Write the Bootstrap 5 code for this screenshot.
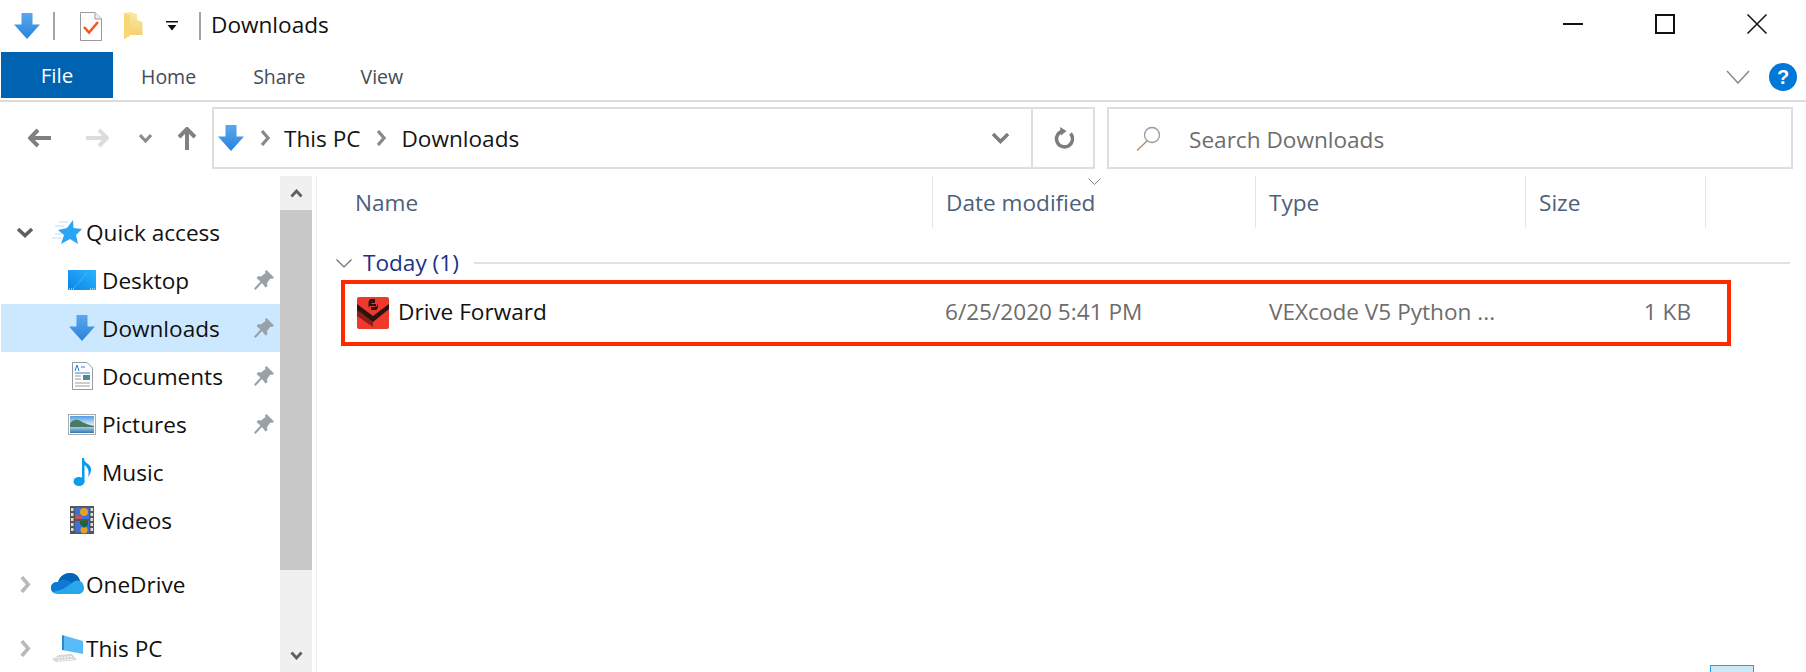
<!DOCTYPE html>
<html lang="en">
<head>
<meta charset="utf-8">
<title>Downloads</title>
<link href="https://cdn.jsdelivr.net/npm/bootstrap@5.3.0/dist/css/bootstrap.min.css" rel="stylesheet">
<style>
html,body{height:672px;overflow:hidden;background:#fff}
body{font-family:"Open Sans","Noto Sans",sans-serif;font-size:22.6px;line-height:1.2;color:#111;position:relative}
svg{display:block;flex:none}
.tbar{height:52px}
.tttl{margin-left:10px;margin-top:-3px}
.tsep{width:2px;height:28px;background:#a5a5a5}
.wbtn{width:92px}
.rib{height:50px;border-bottom:2px solid #dcdcdc}
.ftab{width:112px;height:46px;margin-left:1px;background:#0063b1;color:#fff;font-size:20.6px;padding-top:1px}
.rtab{color:#444b56;font-size:19.5px;padding-top:4px}
.rib-tabs{height:46px}
.hometab{margin-left:28px}.sharetab{margin-left:57px}.viewtab{margin-left:55px}
.addr{height:74px;padding-top:5px;padding-bottom:7px}
.navbtns{width:212px}
.abox{height:62px;border:2px solid #dedede}
.apath{width:883px;margin-right:12px}
.sbox{width:686px}
.adiv{width:2px;height:100%;background:#dedede}
.crumb{color:#151515;padding-top:2px}
.srch{margin-left:28px;padding-top:3px}
.main{height:496px}
.nv{width:280px;padding-left:1px;padding-top:32px}
.nrow{height:48px;color:#111}
.nrow>span{padding-top:2px}
.nrow.sel{background:#cce8ff}
.twist{width:47px}
.slot1{width:38px}
.lead2{width:61px}
.slot2{width:40px}
.pin{margin-right:6px}
.gapr{margin-top:16px}
.vscr{width:32px;background:#f0f0f0}
.vcap{height:34px}
.vthumb{height:360px;background:#c8c8c8}
.pane{margin-left:4px;border-left:1px solid #f0f0f0}
.hdr{height:52px;color:#4c607a}
.hc{height:52px;border-right:1px solid #e5e5e5;position:relative;padding-top:2px}
.hc1{width:616px;padding-left:38px}
.hc2{width:323px;padding-left:13px}
.hc3{width:270px;padding-left:13px}
.hc4{width:180px;padding-left:13px}
.caret{position:absolute;left:155px;top:2px}
.grp{height:52px;color:#1e3287;padding-left:19px;padding-top:18px}
.grp-t{margin-left:11px;margin-right:15px}
.grp-l{height:2px;flex:0 0 auto;width:1316px;background:#e2e2e2}
.frow{width:1390px;height:66px;margin-left:24px;border:4px solid #ff2a00;padding-left:12px}
.fname{width:547px;margin-left:9px;margin-top:-2px}
.fgr{color:#6d6d6d}
.frow .fgr{margin-top:-2px}
.fdate{width:324px}
.ftype{width:270px}
.fsize{width:152px;text-align:right}
.seltick{position:absolute;left:1710px;top:665px;width:44px;height:7px;background:#cce8f7;border:1.5px solid #26a0da;border-bottom:0}
</style>
</head>
<body>
<svg width="0" height="0" class="position-absolute">
<defs>
<linearGradient id="gdl" x1="0" y1="0" x2="0" y2="1"><stop offset="0" stop-color="#5aa8ee"/><stop offset="1" stop-color="#2a82dc"/></linearGradient>
<linearGradient id="gdk" x1="0" y1="1" x2="1" y2="0"><stop offset="0" stop-color="#0a84e6"/><stop offset="1" stop-color="#2db4ff"/></linearGradient>
<linearGradient id="gfo" x1="0" y1="0" x2="0" y2="1"><stop offset="0" stop-color="#fbe9a6"/><stop offset="1" stop-color="#f2cd6c"/></linearGradient>
<linearGradient id="gsk" x1="0" y1="0" x2="0" y2="1"><stop offset="0" stop-color="#4f9fe6"/><stop offset=".5" stop-color="#d4e8f2"/></linearGradient>
<linearGradient id="gwa" x1="0" y1="0" x2="0" y2="1"><stop offset="0" stop-color="#a8cfe0"/><stop offset="1" stop-color="#2f7ab8"/></linearGradient>
<symbol id="dl" viewBox="0 0 26 26"><path d="M7.500 0H18.500V11.500H26L13 26 0 11.500H7.500Z" fill="url(#gdl)"/></symbol>
<symbol id="pin" viewBox="0 0 20 20"><path d="M12.500 0 20 7.500 18 9 16.500 8.500 13 13 13.500 16 11.500 17.500 8 13 1.500 20 0 18.500 6.500 11.500 2.500 8 4.500 6 7 6.500 11.500 3 11 1.500Z" fill="#98a1a8"/></symbol>
<symbol id="cr" viewBox="0 0 10 16"><path d="M2 1 8 8 2 15" fill="none" stroke="#8a8a8a" stroke-width="3.200"/></symbol>
<symbol id="crl" viewBox="0 0 10 16"><path d="M2 1 8 8 2 15" fill="none" stroke="#b9b9b9" stroke-width="3.400"/></symbol>
</defs>
</svg>

<header class="tbar d-flex align-items-center">
  <svg width="26" height="26" style="margin-left:14px"><use href="#dl"/></svg>
  <span class="tsep" style="margin-left:13px"></span>
  <svg width="22" height="29" viewBox="0 0 22 29" style="margin-left:25px"><path d="M.5.500H15L21.500 7V28.500H.5Z" fill="#fff" stroke="#9a9a9a"/><path d="M15 .5V7H21.500" fill="#eee" stroke="#9a9a9a"/><path d="M4 15 9 20.500 18 10" fill="none" stroke="#f0591e" stroke-width="2.500"/></svg>
  <svg width="19" height="28" viewBox="0 0 19 28" style="margin-left:22px"><path d="M0 1 6 0 13 2V8L18.500 10V23H6L0 27Z" fill="url(#gfo)"/><path d="M0 1 6 3V24L0 27Z" fill="#f7d873"/></svg>
  <svg width="12" height="11" viewBox="0 0 12 11" style="margin-left:23px"><path d="M0 0H12V1.500H0ZM1.500 4H10.500L6 9.500Z" fill="#111"/></svg>
  <span class="tsep" style="margin-left:21px"></span>
  <span class="tttl">Downloads</span>
  <div class="ms-auto d-flex align-items-center" style="margin-right:3px;margin-top:-4px">
    <div class="wbtn d-flex justify-content-center"><svg width="20" height="2"><rect width="20" height="2" fill="#111"/></svg></div>
    <div class="wbtn d-flex justify-content-center"><svg width="20" height="20"><rect x="1" y="1" width="18" height="18" fill="none" stroke="#111" stroke-width="2"/></svg></div>
    <div class="wbtn d-flex justify-content-center"><svg width="20" height="20"><path d="M.5.500 19.500 19.500M19.500.500.5 19.500" stroke="#111" stroke-width="1.500"/></svg></div>
  </div>
</header>

<nav class="rib d-flex align-items-start">
  <div class="rib-tabs d-flex align-items-center w-100">
    <div class="ftab d-flex align-items-center justify-content-center">File</div>
    <span class="rtab hometab">Home</span>
    <span class="rtab sharetab">Share</span>
    <span class="rtab viewtab">View</span>
    <div class="ms-auto d-flex align-items-center" style="margin-right:9px;margin-top:4px">
      <svg width="24" height="14" viewBox="0 0 24 14"><path d="M1 1 12 13 23 1" fill="none" stroke="#8a8a8a" stroke-width="1.500"/></svg>
      <svg width="28" height="28" viewBox="0 0 28 28" style="margin-left:19px"><circle cx="14" cy="14" r="14" fill="#0078d7"/><text x="14" y="21" text-anchor="middle" fill="#fff" font-family="Liberation Sans,sans-serif" font-weight="700" font-size="20">?</text></svg>
    </div>
  </div>
</nav>

<section class="addr d-flex align-items-center">
  <div class="navbtns d-flex align-items-center">
    <svg width="23" height="20" viewBox="0 0 23 20" style="margin-left:28px"><path d="M10 2 2 10 10 18M2 10H23" fill="none" stroke="#808080" stroke-width="4"/></svg>
    <svg width="23" height="20" viewBox="0 0 23 20" style="margin-left:35px"><path d="M13 2 21 10 13 18M21 10H0" fill="none" stroke="#dcdcdc" stroke-width="4"/></svg>
    <svg width="13" height="9" viewBox="0 0 13 9" style="margin-left:30px"><path d="M1 1 6.500 7 12 1" fill="none" stroke="#8a8a8a" stroke-width="3"/></svg>
    <svg width="18" height="23" viewBox="0 0 18 23" style="margin-left:26px"><path d="M1 10 9 2 17 10M9 2V23" fill="none" stroke="#808080" stroke-width="4"/></svg>
  </div>
  <div class="abox apath d-flex align-items-center">
    <svg width="26" height="26" style="margin-left:4px"><use href="#dl"/></svg>
    <svg width="10" height="16" style="margin-left:16px"><use href="#cr"/></svg>
    <span class="crumb" style="margin-left:14px">This PC</span>
    <svg width="10" height="16" style="margin-left:16px"><use href="#cr"/></svg>
    <span class="crumb" style="margin-left:15px">Downloads</span>
    <svg class="ms-auto" width="19" height="12" viewBox="0 0 19 12" style="margin-right:21px"><path d="M2 2 9.500 9.500 17 2" fill="none" stroke="#7c7c7c" stroke-width="3.500"/></svg>
    <span class="adiv"></span>
    <svg width="22" height="23" viewBox="0 0 22 23" style="margin-left:19px;margin-right:19px"><path d="M18.500 6.500A8 8 0 1 1 11 4" fill="none" stroke="#7c7c7c" stroke-width="3.500"/><path d="M8 0 14.500 4 9 8.500Z" fill="#7c7c7c"/></svg>
  </div>
  <div class="abox sbox d-flex align-items-center">
    <svg width="25" height="25" viewBox="0 0 25 25" style="margin-left:27px"><circle cx="16" cy="9" r="7.500" fill="none" stroke="#9b9b9b" stroke-width="1.300"/><path d="M11 15 1 24.500" stroke="#b9946a" stroke-width="1.500"/></svg>
    <span class="fgr srch">Search Downloads</span>
  </div>
</section>

<main class="main d-flex">
  <aside class="nv">
    <div class="nrow d-flex align-items-center">
      <div class="twist d-flex justify-content-center"><svg width="18" height="11" viewBox="0 0 18 11"><path d="M2 2 9 8.500 16 2" fill="none" stroke="#5f5f5f" stroke-width="3.500"/></svg></div>
      <div class="slot1 d-flex justify-content-center"><svg width="30" height="24" viewBox="0 0 30 24"><path d="M21 0 21.500 8 30 9 24 15 26 24 18 19 9 24 12 15 6 10 15 8Z" fill="#29a5f5"/><path d="M7 2H16M3 6H12M3 14H10M0 18H10" stroke="#b7def8" stroke-width="1.200"/></svg></div>
      <span>Quick access</span>
    </div>
    <div class="nrow d-flex align-items-center">
      <div class="lead2"></div><div class="slot2 d-flex justify-content-center"><svg width="28" height="20" viewBox="0 0 28 20"><rect width="28" height="20" fill="url(#gdk)"/><path d="M6 18 19 3" stroke="#5fc6ff" opacity=".6"/><path d="M1 19H7M22 19H27" stroke="#fff" stroke-dasharray="1 1"/></svg></div>
      <span>Desktop</span>
      <svg class="pin ms-auto" width="20" height="20"><use href="#pin"/></svg>
    </div>
    <div class="nrow sel d-flex align-items-center">
      <div class="lead2"></div><div class="slot2 d-flex justify-content-center"><svg width="26" height="26"><use href="#dl"/></svg></div>
      <span>Downloads</span>
      <svg class="pin ms-auto" width="20" height="20"><use href="#pin"/></svg>
    </div>
    <div class="nrow d-flex align-items-center">
      <div class="lead2"></div><div class="slot2 d-flex justify-content-center"><svg width="21" height="28" viewBox="0 0 21 28"><path d="M.5.500H15L20.500 6V27.500H.5Z" fill="#fff" stroke="#999"/><path d="M9 5H13M3 11H18" stroke="#2d7fd6" fill="none"/><path d="M3 9 5 3 7 9" stroke="#2d7fd6" fill="none"/><rect x="11" y="13" width="7" height="5" fill="#4a8a9a"/><path d="M3 14H9M3 17H9M3 21H18M3 24H18" stroke="#9a9a9a"/></svg></div>
      <span>Documents</span>
      <svg class="pin ms-auto" width="20" height="20"><use href="#pin"/></svg>
    </div>
    <div class="nrow d-flex align-items-center">
      <div class="lead2"></div><div class="slot2 d-flex justify-content-center"><svg width="28" height="21" viewBox="0 0 28 21"><rect x=".5" y=".5" width="27" height="20" fill="#fff" stroke="#aaa"/><rect x="2" y="2" width="24" height="17" fill="url(#gsk)"/><path d="M2 9C6 5 10 5 14 8 18 10 22 11 26 12V13H2Z" fill="#4a7a62"/><rect x="2" y="13" width="24" height="6" fill="url(#gwa)"/></svg></div>
      <span>Pictures</span>
      <svg class="pin ms-auto" width="20" height="20"><use href="#pin"/></svg>
    </div>
    <div class="nrow d-flex align-items-center">
      <div class="lead2"></div><div class="slot2 d-flex justify-content-center"><svg width="19" height="28" viewBox="0 0 19 28"><ellipse cx="6" cy="23.500" rx="5.500" ry="4.500" fill="#0a9bee"/><path d="M9 2V24H11.500V7C14 9 17 12 15 19 18.500 15 19.500 9 15 6 12.500 4.500 11 3 11 0H9Z" fill="#0a9bee"/></svg></div>
      <span>Music</span>
    </div>
    <div class="nrow d-flex align-items-center">
      <div class="lead2"></div><div class="slot2 d-flex justify-content-center"><svg width="24" height="28" viewBox="0 0 24 28"><rect width="24" height="28" fill="#555"/><path d="M1 2H3.500V5H1ZM1 7H3.500V10H1ZM1 12H3.500V15H1ZM1 17H3.500V20H1ZM1 22H3.500V25H1ZM20.500 2H23V5H20.500ZM20.500 7H23V10H20.500ZM20.500 12H23V15H20.500ZM20.500 17H23V20H20.500ZM20.500 22H23V25H20.500Z" fill="#ddd"/><rect x="5" y="1.500" width="14" height="11.500" fill="#3a70e0"/><rect x="5" y="15" width="14" height="11.500" fill="#3a70e0"/><circle cx="14" cy="6" r="4" fill="#e8a020"/><circle cx="14" cy="24" r="3.500" fill="#e8a020"/><path d="M6 13H12V10L6 9Z" fill="#d05050"/><path d="M10 15H18V19L14 22 10 18Z" fill="#1a6a30"/></svg></div>
      <span>Videos</span>
    </div>
    <div class="nrow gapr d-flex align-items-center">
      <div class="twist d-flex justify-content-center"><svg width="12" height="17"><use href="#crl"/></svg></div>
      <div class="slot1 d-flex justify-content-center"><svg width="33" height="22" viewBox="0 0 33 22"><path d="M7 21C2 21 0 18 0 15 0 11 3 8.500 7 9 9 3 14 0 19 0 24 0 28 3 29 8 31.500 9 33 12 33 15 33 19 30 21 27 21Z" fill="#28a8ea"/><path d="M7 9C9 3 14 0 19 0 24 0 28 3 29 8 25 7 23 8 21 10L14 7C11 7 9 8 7 9Z" fill="#0364b8"/><path d="M0 15C0 11 3 8.500 7 9 9 8 11 7 14 7L21 10 12 16 2 19C1 18 0 17 0 15Z" fill="#0f78d4"/></svg></div>
      <span>OneDrive</span>
    </div>
    <div class="nrow gapr d-flex align-items-center">
      <div class="twist d-flex justify-content-center"><svg width="12" height="17"><use href="#crl"/></svg></div>
      <div class="slot1 d-flex justify-content-center"><svg width="31" height="27" viewBox="0 0 31 27"><path d="M10 0 31 6V19L10 15Z" fill="#58bdf7"/><path d="M10 0 12 1V15L10 15Z" fill="#2a88c8"/><path d="M7 20 20 19 25 25 4 27 0 24Z" fill="#d4d8da"/><path d="M3 23 21 21.500M6 25.500 22 24" stroke="#fff" stroke-dasharray="2 1"/></svg></div>
      <span>This PC</span>
    </div>
  </aside>

  <div class="vscr d-flex flex-column">
    <div class="vcap d-flex align-items-center justify-content-center"><svg width="13" height="9" viewBox="0 0 13 9"><path d="M1.500 7.500 6.500 2 11.500 7.500" fill="none" stroke="#5f5f5f" stroke-width="2.800"/></svg></div>
    <div class="vthumb"></div>
    <div class="mt-auto d-flex align-items-center justify-content-center vcap"><svg width="13" height="9" viewBox="0 0 13 9"><path d="M1.500 1.500 6.500 7 11.500 1.500" fill="none" stroke="#5f5f5f" stroke-width="2.800"/></svg></div>
  </div>

  <section class="pane flex-grow-1">
    <div class="hdr d-flex">
      <div class="hc hc1 d-flex align-items-center">Name</div>
      <div class="hc hc2 d-flex align-items-center">Date modified
        <svg class="caret" width="13" height="7" viewBox="0 0 13 7"><path d="M.5.500 6.500 6.500 12.500.5" fill="none" stroke="#808080"/></svg></div>
      <div class="hc hc3 d-flex align-items-center">Type</div>
      <div class="hc hc4 d-flex align-items-center">Size</div>
    </div>
    <div class="grp d-flex align-items-center">
      <svg width="16" height="9" viewBox="0 0 16 9"><path d="M.5.500 8 8 15.500.5" fill="none" stroke="#6b6b6b" stroke-width="1.200"/></svg>
      <span class="grp-t">Today (1)</span>
      <span class="grp-l"></span>
    </div>
    <div class="frow d-flex align-items-center">
      <svg width="32" height="32" viewBox="0 0 32 32"><rect width="32" height="32" rx="2" fill="#ee3a2c"/><path d="M0 13 16 25 16 30 0 19Z" fill="#8f1d17"/><path d="M0 7 16 19 32 7V12L16 25 0 13Z" fill="#2c1210"/><path d="M13 2H18V6H14.500V7H19V9H13L11.500 10.500V5ZM21 6V10L19.500 13H14V10H17.500V9.500H20Z" fill="#2c1210"/></svg>
      <span class="fname">Drive Forward</span>
      <span class="fgr fdate">6/25/2020 5:41 PM</span>
      <span class="fgr ftype">VEXcode V5 Python ...</span>
      <span class="fgr fsize">1 KB</span>
    </div>
  </section>
</main>
<div class="seltick"></div>
</body>
</html>
